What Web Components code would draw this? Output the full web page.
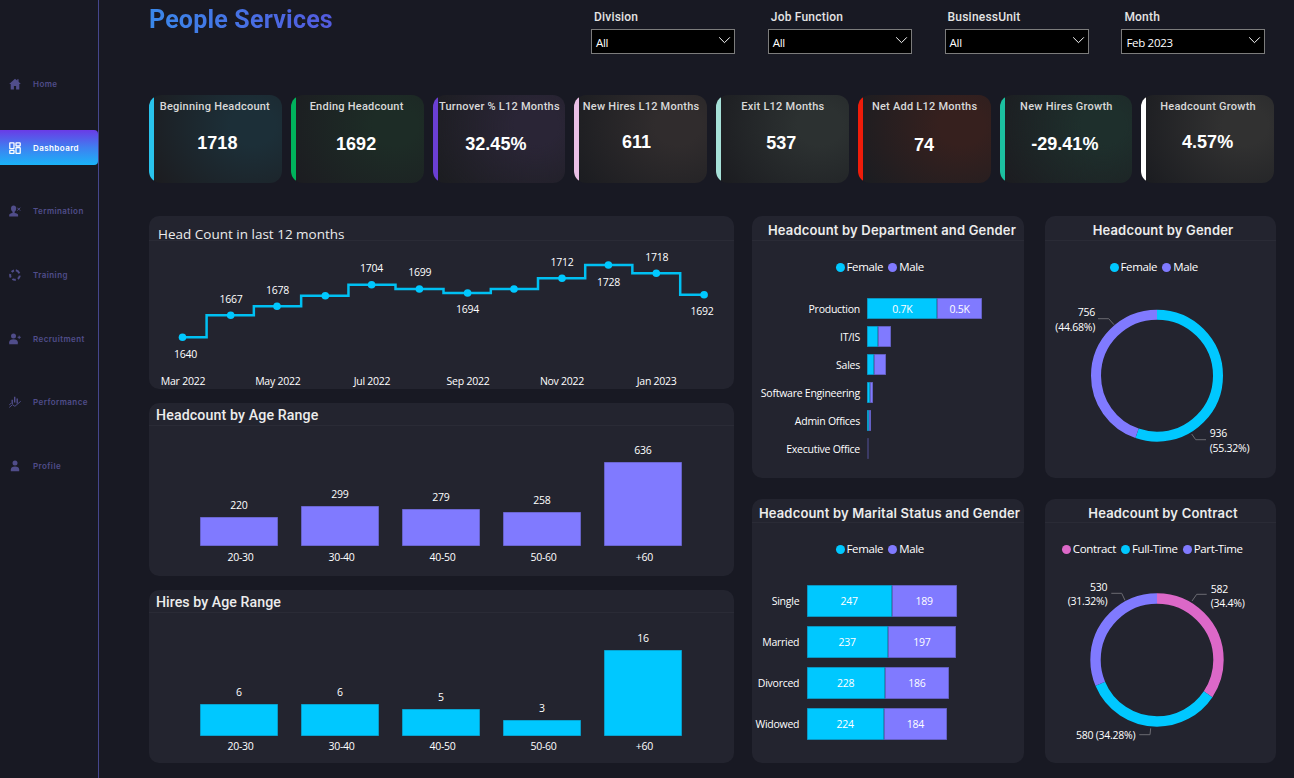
<!DOCTYPE html>
<html lang="en"><head><meta charset="utf-8"><title>People Services</title>
<style>
html,body{margin:0;padding:0;background:#181923;}
body{width:1294px;height:778px;overflow:hidden;font-family:"Open Sans","Liberation Sans",sans-serif;color:#fff;}
</style></head>
<body>
<people-app>
  <side-nav slot="nav">
    <nav-item icon="home">Home</nav-item>
    <nav-item icon="dash" active>Dashboard</nav-item>
    <nav-item icon="term">Termination</nav-item>
    <nav-item icon="train">Training</nav-item>
    <nav-item icon="recruit">Recruitment</nav-item>
    <nav-item icon="perf">Performance</nav-item>
    <nav-item icon="profile">Profile</nav-item>
  </side-nav>

  <top-bar slot="top">
    <span slot="title">People Services</span>
    <filter-select label="Division" value="All"></filter-select>
    <filter-select label="Job Function" value="All"></filter-select>
    <filter-select label="BusinessUnit" value="All"></filter-select>
    <filter-select label="Month" value="Feb 2023"></filter-select>
  </top-bar>

  <kpi-row slot="kpis">
    <kpi-card color="#29c3ec" tint="#1c2f38" value="1718" dx="2" dy="-1" lx="-1">Beginning Headcount</kpi-card>
    <kpi-card color="#00b35c" tint="#1d2c26" value="1692" dx="-1" dy="0" lx="-1">Ending Headcount</kpi-card>
    <kpi-card color="#6b3fd4" tint="#2a2536" value="32.45%" dx="-3" dy="0">Turnover % L12 Months</kpi-card>
    <kpi-card color="#eabfe6" tint="#302c2d" value="611" dx="-4" dy="-2">New Hires L12 Months</kpi-card>
    <kpi-card color="#a6e0d8" tint="#2c3131" value="537" dx="-1" dy="-1">Exit L12 Months</kpi-card>
    <kpi-card color="#ee1c0a" tint="#36201e" value="74" dx="0" dy="1">Net Add L12 Months</kpi-card>
    <kpi-card color="#1cc0a0" tint="#1e2f2c" value="-29.41%" dx="-1" dy="0">New Hires Growth</kpi-card>
    <kpi-card color="#ffffff" tint="#313131" value="4.57%" dx="0" dy="-2">Headcount Growth</kpi-card>
  </kpi-row>

  <chart-panel slot="a1" style="--pt:11px;--hh:25px;--tf:400 13.5px/14px 'Open Sans';--tx:9px;--ta:left;--ts:0px;">
    <span slot="title">Head Count in last 12 months</span>
    <step-line></step-line>
  </chart-panel>
  <chart-panel slot="a2" style="--pt:5px;--hh:23px;--tf:500 14.2px/14px Roboto;--tx:7px;--ta:left;--ts:.12px;">
    <span slot="title">Headcount by Age Range</span>
    <column-chart style="--pb:12px;--vm:5px;--cm:4px">
      <col-bar h="29" value="220" color="#807aff">20-30</col-bar>
      <col-bar h="39.5" value="299" color="#807aff">30-40</col-bar>
      <col-bar h="37" value="279" color="#807aff">40-50</col-bar>
      <col-bar h="34" value="258" color="#807aff">50-60</col-bar>
      <col-bar h="84" value="636" color="#807aff">+60</col-bar>
    </column-chart>
  </chart-panel>
  <chart-panel slot="a3" style="--pt:5px;--hh:23px;--tf:500 14.2px/14px Roboto;--tx:7px;--ta:left;--ts:.05px;">
    <span slot="title">Hires by Age Range</span>
    <column-chart style="--pb:10px;--vm:5px;--cm:3px">
      <col-bar h="32" value="6" color="#00c8ff">20-30</col-bar>
      <col-bar h="32" value="6" color="#00c8ff">30-40</col-bar>
      <col-bar h="27" value="5" color="#00c8ff">40-50</col-bar>
      <col-bar h="16" value="3" color="#00c8ff">50-60</col-bar>
      <col-bar h="85.5" value="16" color="#00c8ff">+60</col-bar>
    </column-chart>
  </chart-panel>

  <chart-panel slot="b1" style="--pt:7px;--hh:25px;--tf:600 13px/14px Inter;--tx:8px;--ta:center;">
    <span slot="title">Headcount by Department and Gender</span>
    <chart-legend style="--lx:83.5px">
      <legend-item color="#00c8ff">Female</legend-item>
      <legend-item color="#807aff">Male</legend-item>
    </chart-legend>
    <hbar-chart style="--lw:108px;--rh:21px;--rg:7px;--mt:24px;--ld:2px">
      <hbar-row label="Production"><bar-seg w="70" color="#00c8ff">0.7K</bar-seg><bar-seg w="44.5" color="#807aff">0.5K</bar-seg></hbar-row>
      <hbar-row label="IT/IS"><bar-seg w="11" color="#00c8ff"></bar-seg><bar-seg w="12.5" color="#807aff"></bar-seg></hbar-row>
      <hbar-row label="Sales"><bar-seg w="6.7" color="#00c8ff"></bar-seg><bar-seg w="12" color="#807aff"></bar-seg></hbar-row>
      <hbar-row label="Software Engineering"><bar-seg w="2.4" color="#00c8ff"></bar-seg><bar-seg w="3.6" color="#807aff"></bar-seg></hbar-row>
      <hbar-row label="Admin Offices"><bar-seg w="1.7" color="#00c8ff"></bar-seg><bar-seg w="2" color="#807aff"></bar-seg></hbar-row>
      <hbar-row label="Executive Office"><bar-seg w="1.8" color="#46447a"></bar-seg></hbar-row>
    </hbar-chart>
  </chart-panel>
  <chart-panel slot="b2" style="--pt:7px;--hh:24px;--tf:600 13px/14px Inter;--tx:3px;--ta:center;">
    <span slot="title">Headcount by Marital Status and Gender</span>
    <chart-legend style="--lx:83.5px">
      <legend-item color="#00c8ff">Female</legend-item>
      <legend-item color="#807aff">Male</legend-item>
    </chart-legend>
    <hbar-chart style="--lw:47.3px;--rh:32px;--rg:9.1px;--mt:29px">
      <hbar-row label="Single"><bar-seg w="85" color="#00c8ff">247</bar-seg><bar-seg w="65" color="#807aff">189</bar-seg></hbar-row>
      <hbar-row label="Married"><bar-seg w="81" color="#00c8ff">237</bar-seg><bar-seg w="68.4" color="#807aff">197</bar-seg></hbar-row>
      <hbar-row label="Divorced"><bar-seg w="78" color="#00c8ff">228</bar-seg><bar-seg w="64.4" color="#807aff">186</bar-seg></hbar-row>
      <hbar-row label="Widowed"><bar-seg w="77" color="#00c8ff">224</bar-seg><bar-seg w="63.4" color="#807aff">184</bar-seg></hbar-row>
    </hbar-chart>
  </chart-panel>

  <chart-panel slot="c1" style="--pt:7px;--hh:25px;--tf:600 13px/14px Inter;--tx:5px;--ta:center;">
    <span slot="title">Headcount by Gender</span>
    <chart-legend style="--lx:64.5px">
      <legend-item color="#00c8ff">Female</legend-item>
      <legend-item color="#807aff">Male</legend-item>
    </chart-legend>
    <donut-chart top="274" cx="1157" cy="375.7" r="61" sw="10"
      segments='[[55.32,"#00c8ff"],[44.68,"#807aff"]]'
      leaders='["1098,318.7 1108.7,318.7 1114,324.7","1206,439.7 1195.7,439.7 1191.7,434"]'
      labels='[[1095,316,"end","756"],[1095,331,"end","(44.68%)"],[1209.7,437,"start","936"],[1209.7,452,"start","(55.32%)"]]'></donut-chart>
  </chart-panel>
  <chart-panel slot="c2" style="--pt:7px;--hh:24px;--tf:600 13px/14px Inter;--tx:5px;--ta:center;">
    <span slot="title">Headcount by Contract</span>
    <chart-legend style="--lx:16.8px">
      <legend-item color="#dc68c8">Contract</legend-item>
      <legend-item color="#00c8ff">Full-Time</legend-item>
      <legend-item color="#807aff">Part-Time</legend-item>
    </chart-legend>
    <donut-chart top="556" cx="1157" cy="660" r="61.5" sw="10.4"
      segments='[[34.4,"#dc68c8"],[34.28,"#00c8ff"],[31.32,"#807aff"]]'
      leaders='["1206.7,594.3 1196.7,594.3 1192,601","1111.3,593.3 1121.7,593.3 1125,600.3","1139.3,734.7 1150,734.7 1150.7,728.3"]'
      labels='[[1210.7,593.3,"start","582"],[1210.7,607.3,"start","(34.4%)"],[1107.3,591.3,"end","530"],[1107.3,605.3,"end","(31.32%)"],[1135.3,739,"end","580 (34.28%)"]]'></donut-chart>
  </chart-panel>
</people-app>

<script>
const def=(n,c)=>customElements.define(n,c);
class Base extends HTMLElement{
  render(html){const s=this.attachShadow({mode:'open'});s.innerHTML=html;return s;}
}
const CHART_FONT=`font-family:"Open Sans","Liberation Sans",sans-serif;font-size:10.5px;letter-spacing:-.25px;`;

def('people-app',class extends Base{connectedCallback(){this.render(`<style>
:host{display:flex;width:1294px;height:778px;overflow:hidden;background:#181923;}
.main{flex:1;min-width:0;padding:0 18px 0 50px;display:flex;flex-direction:column;}
.grid{display:grid;grid-template-columns:585px 290px 252px;margin-top:33px;height:547px;}
.col{display:flex;flex-direction:column;}
.col.l{gap:14px;}
.col.m{gap:21px;margin-left:18px;width:272px;}
.col.r{gap:21px;margin-left:21px;width:231px;}
</style>
<slot name="nav"></slot>
<div class="main">
  <slot name="top"></slot>
  <slot name="kpis"></slot>
  <div class="grid">
    <div class="col l"><slot name="a1"></slot><slot name="a2"></slot><slot name="a3"></slot></div>
    <div class="col m"><slot name="b1"></slot><slot name="b2"></slot></div>
    <div class="col r"><slot name="c1"></slot><slot name="c2"></slot></div>
  </div>
</div>`);
const h={a1:173,a2:172.7,a3:173.3,b1:262,b2:264,c1:262,c2:264};
for(const k in h){const e=this.querySelector(`[slot=${k}]`);e.style.height=h[k]+'px';}
}});

def('side-nav',class extends Base{constructor(){super();this.render(`<style>
:host{display:flex;flex:none;box-sizing:border-box;width:99px;height:778px;border-right:1px solid #45468c;flex-direction:column;gap:28.700px;padding-top:66.500px;background:#181923;}
</style><slot></slot>`);}});

const ICONS={
home:`<path d="M6 .8 .2 6h1.500v5.400h3.200V8h2.200v3.400h3.200V6h1.500L9.600 3.800V1.300H8.200v1.200z"/>`,
dash:`<g fill="none" stroke="currentColor" stroke-width="1.300"><rect x=".8" y=".8" width="4.200" height="5.800" rx=".4"/><rect x="7" y=".8" width="4.200" height="3.200" rx=".4"/><rect x=".8" y="8.400" width="4.200" height="2.900" rx=".4"/><rect x="7" y="5.600" width="4.200" height="5.700" rx=".4"/></g>`,
term:`<path d="M4.600.6c1.600 0 2.600 1.200 2.600 2.900 0 1.500-.7 2.700-1.600 3.200v1l2.600 1.100c.6.3.9.8.9 1.400v1.200H.2v-1.200c0-.6.3-1.100.9-1.400L3.600 7.700v-1C2.700 6.200 2 5 2 3.500 2 1.800 3 .6 4.600.6z"/><path d="M8.300 2.700l2.900 2.900m0-2.900L8.300 5.600" fill="none" stroke="currentColor" stroke-width="1"/>`,
train:`<g fill="none" stroke="currentColor" stroke-width="2"><path d="M2.700 3A4.600 4.600 0 0 1 5 1.500"/><path d="M6.800 1.300A4.700 4.700 0 0 1 10.300 4.300"/><path d="M10.800 6.700A4.700 4.700 0 0 1 8.800 9.900"/><path d="M6.800 10.800A4.700 4.700 0 0 1 3.400 10"/><path d="M1.800 8.500A4.700 4.700 0 0 1 1.300 5"/></g>`,
recruit:`<circle cx="4.500" cy="2.900" r="2.500"/><path d="M.2 11.200V9.300C.2 7.500 2 6.300 4.500 6.300s4.300 1.200 4.300 3v1.900z"/><path d="M8.600 4.300h3.200M10.200 2.700v3.200" fill="none" stroke="currentColor" stroke-width="1"/>`,
perf:`<g fill="none" stroke="currentColor"><path d="M3.200 8V3.700M5.700 6.500V.8M8.200 7.500V2.500" stroke-width="1.400"/><path d="M.3 11.400 3.500 8.700l2.400 1.600 5.800-5" stroke-width="1"/><path d="M.3 8.800 2 7.400" stroke-width="1"/></g>`,
profile:`<circle cx="6" cy="2.900" r="2.500"/><path d="M1.800 11.300V9.400C1.800 7.700 3.500 6.600 6 6.600s4.200 1.100 4.200 2.800v1.900z"/>`
};
def('nav-item',class extends Base{connectedCallback(){const a=this.hasAttribute('active');this.render(`<style>
:host{display:flex;align-items:center;height:35px;flex:none;box-sizing:border-box;padding-left:9px;gap:12px;
 font:600 8px/10px Inter,"Liberation Sans",sans-serif;letter-spacing:.42px;color:${a?'#fff':'#504d8a'};
 ${a?'background:linear-gradient(180deg,#6a3be6 0%,#3f7ff0 50%,#1ab4f8 100%);border-radius:0 4px 4px 0;':''}}
svg{width:12px;height:12px;flex:none;fill:currentColor;}
</style><svg viewBox="0 0 12 12" aria-hidden="true">${ICONS[this.getAttribute('icon')]}</svg><slot></slot>`);}});

def('top-bar',class extends Base{constructor(){super();this.render(`<style>
:host{display:flex;flex:none;height:95px;box-sizing:border-box;}
.t{width:442px;flex:none;padding-top:4px;font:700 25px/32px Roboto,"Liberation Sans",sans-serif;letter-spacing:.2px;}
.t ::slotted(span){background:linear-gradient(90deg,#3a88ea,#535ade);-webkit-background-clip:text;background-clip:text;color:transparent;}
.f{display:grid;grid-template-columns:repeat(4,144px);column-gap:32.800px;align-self:flex-start;}
</style><div class="t"><slot name="title"></slot></div><div class="f"><slot></slot></div>`);}});

def('filter-select',class extends Base{connectedCallback(){this.render(`<style>
:host{display:block;}
.l{font:500 12px/14px Roboto,"Liberation Sans",sans-serif;letter-spacing:.2px;color:#e4e4e4;padding:10px 0 5px 3px;}
.b{box-sizing:border-box;height:25px;background:#000;border:1.500px solid #7c7c7c;display:flex;align-items:center;justify-content:space-between;padding:3px 3px 0 4px;
 font:400 11.500px/14px "Open Sans","Liberation Sans",sans-serif;letter-spacing:-.3px;color:#fff;}
svg{width:13px;height:8px;margin-top:-7px;}
</style><div class="l">${this.getAttribute('label')}</div><div class="b"><span>${this.getAttribute('value')}</span><svg viewBox="0 0 14 9"><path d="M1 1.500 7 7.500 13 1.500" fill="none" stroke="#fff" stroke-width="1.100"/></svg></div>`);}});

def('kpi-row',class extends Base{constructor(){super();this.render(`<style>
:host{display:grid;flex:none;grid-template-columns:repeat(8,132.750px);column-gap:9px;height:88px;}
</style><slot></slot>`);}});

def('kpi-card',class extends Base{connectedCallback(){const g=n=>this.getAttribute(n);this.render(`<style>
:host{display:flex;box-sizing:border-box;height:88px;border-radius:12px;overflow:hidden;
 background:radial-gradient(ellipse 85% 110% at 78% 35%,${g('tint')} 0%,${g('tint')} 20%,transparent 100%),#1c1d21;}
.bar{flex:none;width:5px;background:${g('color')};}
.c{flex:1;min-width:0;display:flex;flex-direction:column;align-items:center;padding-top:5px;}
.l{font:500 11px/14px Roboto,"Liberation Sans",sans-serif;letter-spacing:.24px;color:#d9d9d9;white-space:nowrap;margin-left:${-4+2*(+g('lx')||0)}px;}
.v{font:700 18px/22px "Liberation Sans",Arial,sans-serif;color:#fff;margin-top:${19+ +g('dy')}px;transform:translateX(${(+g('dx'))-2.500}px);}
</style><div class="bar"></div><div class="c"><div class="l"><slot></slot></div><div class="v">${g('value')}</div></div>`);}});

def('chart-panel',class extends Base{constructor(){super();this.render(`<style>
:host{display:flex;flex-direction:column;box-sizing:border-box;background:#23242f;border-radius:10px;overflow:hidden;flex:none;}
.h{flex:none;box-sizing:border-box;height:var(--hh);padding:var(--pt) 0 0 var(--tx);border-bottom:1px solid #2a2b36;font:var(--tf);letter-spacing:var(--ts,.17px);text-align:var(--ta);color:#ececec;white-space:nowrap;}
.b{flex:1;min-height:0;display:flex;flex-direction:column;}
</style><div class="h"><slot name="title"></slot></div><div class="b"><slot></slot></div>`);}});

def('chart-legend',class extends Base{constructor(){super();this.render(`<style>
:host{display:flex;flex:none;gap:5px;height:14px;align-items:center;padding-left:var(--lx);margin-top:var(--lt,19px);}
</style><slot></slot>`);}});
def('legend-item',class extends Base{connectedCallback(){this.render(`<style>
:host{display:inline-flex;align-items:center;gap:2px;font:400 11.500px/14px "Open Sans","Liberation Sans",sans-serif;letter-spacing:-.35px;color:#fff;}
i{width:9px;height:9px;border-radius:50%;background:${this.getAttribute('color')};flex:none;}
</style><i></i><slot></slot>`);}});

def('column-chart',class extends Base{constructor(){super();this.render(`<style>
:host{display:flex;flex:1;min-height:0;align-items:flex-end;gap:23px;padding:0 0 var(--pb) 51px;}
</style><slot></slot>`);}});
def('col-bar',class extends Base{connectedCallback(){const g=n=>this.getAttribute(n);this.render(`<style>
:host{display:flex;flex-direction:column;align-items:center;width:78px;${CHART_FONT}color:#fff;}
.v{line-height:14px;margin-bottom:var(--vm);}
.b{width:78px;box-sizing:border-box;height:${g('h')}px;background:${g('color')};box-shadow:inset 0 0 0 .6px rgba(35,36,47,.45);}
.c{line-height:14px;margin-top:var(--cm);padding-left:3px;}
</style><div class="v">${g('value')}</div><div class="b"></div><div class="c"><slot></slot></div>`);}});

def('hbar-chart',class extends Base{constructor(){super();this.render(`<style>
:host{display:flex;flex-direction:column;gap:var(--rg);margin-top:var(--mt);}
</style><slot></slot>`);}});
def('hbar-row',class extends Base{connectedCallback(){this.render(`<style>
:host{display:flex;align-items:stretch;height:var(--rh);${CHART_FONT}color:#fff;}
.l{width:var(--lw);flex:none;text-align:right;line-height:calc(var(--rh) + var(--ld,0px));white-space:nowrap;margin-right:7.300px;}
.bars{display:flex;align-items:stretch;}
</style><div class="l">${this.getAttribute('label')}</div><div class="bars"><slot></slot></div>`);}});
def('bar-seg',class extends Base{connectedCallback(){const g=n=>this.getAttribute(n);this.render(`<style>
:host{display:flex;align-items:center;justify-content:center;box-sizing:border-box;width:${g('w')}px;background:${g('color')};box-shadow:inset 0 0 0 .7px rgba(35,36,47,.4);color:#fff;}
</style><slot></slot>`);}});

def('step-line',class extends Base{connectedCallback(){
const xs=[182.5,230.7,277,325.3,371.6,419.4,467.6,514,562,608.4,656.3,704.1];
const ys=[337.3,315.3,306.3,295.7,284.7,289,293,289,278.3,265,273.3,294.7];
let d=`M${xs[0]} ${ys[0]}`;for(let i=1;i<xs.length;i++){const m=(xs[i-1]+xs[i])/2;d+=`H${m}V${ys[i]}H${xs[i]}`;}
const L=[[185.6,354,'1640'],[231,299,'1667'],[277.4,290,'1678'],[371.6,268,'1704'],[419.8,272,'1699'],[467.6,309,'1694'],[562,262,'1712'],[608.4,282,'1728'],[656.7,257,'1718'],[702,311,'1692']];
const A=[[183,'Mar 2022'],[277.8,'May 2022'],[372,'Jul 2022'],[468,'Sep 2022'],[562,'Nov 2022'],[656.7,'Jan 2023']];
this.render(`<style>
:host{display:block;flex:1;min-height:0;}
svg{display:block;width:585px;height:148px;}
text{${CHART_FONT}fill:#fff;text-anchor:middle;}
</style><svg viewBox="149 241 585 148"><path d="${d}" fill="none" stroke="#00c0f2" stroke-width="2.500"/>
${xs.map((x,i)=>`<circle cx="${x}" cy="${ys[i]}" r="3.800" fill="#00c8ff"/>`).join('')}
${L.map(l=>`<text x="${l[0]}" y="${l[1]+3.700}">${l[2]}</text>`).join('')}
${A.map(a=>`<text x="${a[0]}" y="384.700">${a[1]}</text>`).join('')}
</svg>`);}});

def('donut-chart',class extends Base{connectedCallback(){const g=n=>this.getAttribute(n),J=n=>JSON.parse(g(n));
const top=+g('top'),cx=+g('cx'),cy=+g('cy');let acc=0;
const segs=J('segments').map(s=>{const o=`<circle cx="${cx}" cy="${cy}" r="${g('r')}" fill="none" stroke="${s[1]}" stroke-width="${g('sw')}" pathLength="100" stroke-dasharray="${s[0]} ${100-s[0]}" stroke-dashoffset="${-acc}" transform="rotate(-90 ${cx} ${cy})"/>`;acc+=s[0];return o;}).join('');
this.render(`<style>
:host{display:block;flex:1;min-height:0;}
svg{display:block;width:231px;height:200px;overflow:visible;}
text{${CHART_FONT}fill:#fff;}
</style><svg viewBox="1045 ${top} 231 200">${segs}
${J('leaders').map(p=>`<polyline points="${p}" fill="none" stroke="#6b6b72" stroke-width="1"/>`).join('')}
${J('labels').map(l=>`<text x="${l[0]}" y="${l[1]}" text-anchor="${l[2]}">${l[3]}</text>`).join('')}
</svg>`);}});
</script>
</body></html>
